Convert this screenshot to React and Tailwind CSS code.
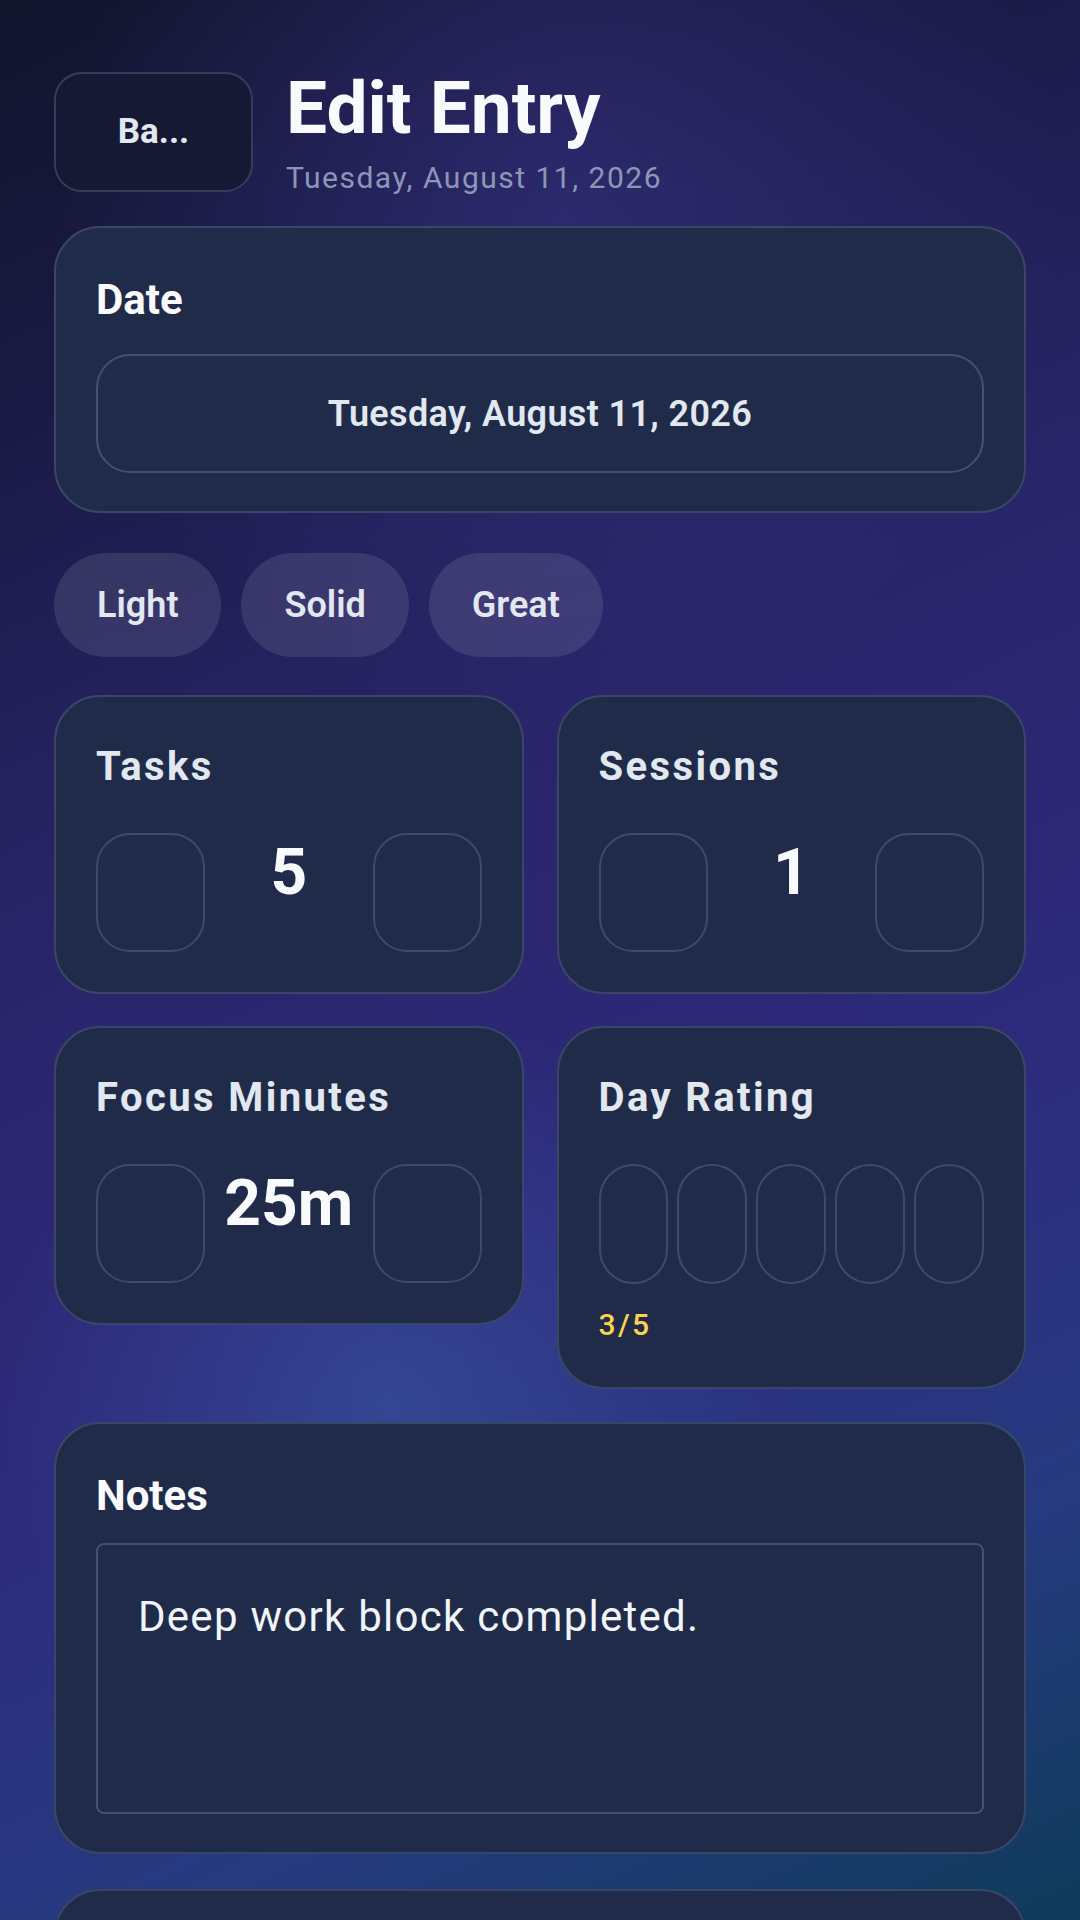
import React from "react";

const card = "rounded-[46px] border-2 border-[#3a4666] bg-[#202b4a]";

function Stepper({ label, value }) {
  return (
    <div className={`${card} p-[40px]`}>
      <div className="text-[40px] leading-[60px] font-bold tracking-[0.06em] text-[#e2e8f0]">{label}</div>
      <div className="mt-[36px] flex items-start justify-between">
        <button className="w-[109px] h-[119px] rounded-[34px] border-2 border-[#3e4a69]" />
        <span className="text-[64px] leading-[80px] font-bold text-[#f8fafc]">{value}</span>
        <button className="w-[109px] h-[119px] rounded-[34px] border-2 border-[#3e4a69]" />
      </div>
    </div>
  );
}

export default function App() {
  return (
    <div className="h-[1920px] w-full overflow-hidden font-['Roboto',sans-serif] px-[54px] pt-[72px] bg-[radial-gradient(circle_at_52%_11%,rgba(58,54,140,0.55),transparent_28%),radial-gradient(circle_at_36%_73%,rgba(60,100,175,0.45),transparent_25%),linear-gradient(155deg,#12142c_0%,#1b1a46_18%,#29256a_40%,#2e2a7c_62%,#263a80_82%,#0f3b5a_100%)]">
      {/* header: back button + title */}
      <header className="flex items-start gap-[33px] h-[120px]">
        <button className="w-[199px] h-[120px] shrink-0 rounded-[28px] border-2 border-[#363d5c] bg-[#151934] text-[35px] font-bold text-[#e2e8f0]">
          Ba...
        </button>
        <div>
          <h1 className="text-[73px] leading-none font-bold text-[#f8fafc]">Edit Entry</h1>
          <p className="mt-[15px] text-[30px] leading-[1.2] tracking-[0.05em] text-[#8c97b8]">Tuesday, August 11, 2026</p>
        </div>
      </header>

      <section className={`${card} mt-[34px] px-[40px] pt-[40px] pb-[38px]`}>
        <div className="text-[42px] leading-[63px] font-bold text-[#f8fafc]">Date</div>
        <div className="mt-[23px] h-[119px] rounded-[34px] border-2 border-[#45516f] flex items-center justify-center text-[36px] font-semibold tracking-[0.01em] text-[#e2e8f0]">
          Tuesday, August 11, 2026
        </div>
      </section>

      <div className="mt-[40px] flex gap-[20px]">
        {["Light", "Solid", "Great"].map((t) => (
          <button key={t} className="h-[104px] px-[43px] rounded-full bg-white/10 text-[36px] font-semibold text-[#e2e8f0]">
            {t}
          </button>
        ))}
      </div>

      <div className="mt-[38px] grid grid-cols-2 gap-x-[33px] gap-y-[32px] items-start">
        <Stepper label="Tasks" value="5" />
        <Stepper label="Sessions" value="1" />
        <Stepper label="Focus Minutes" value="25m" />
        <div className={`${card} p-[40px]`}>
          <div className="text-[40px] leading-[60px] font-bold tracking-[0.06em] text-[#e2e8f0]">Day Rating</div>
          <div className="mt-[36px] flex gap-[9px]">
            {[1, 2, 3, 4, 5].map((n) => (
              <button key={n} className="flex-1 h-[120px] rounded-full border-2 border-[#3e4a69]" />
            ))}
          </div>
          <div className="mt-[18px] text-[30px] leading-[1.5] font-medium tracking-[0.08em] text-[#fcd34d]">3/5</div>
        </div>
      </div>

      <section className={`${card} mt-[33px] px-[40px] pt-[40px] pb-[38px]`}>
        <div className="text-[42px] leading-[63px] font-bold text-[#f8fafc]">Notes</div>
        <div className="mt-[16px] h-[271px] rounded-[8px] border-2 border-[#45516f] p-[40px] text-[42px] leading-[63px] tracking-[0.03em] text-[#f1f5f9]">
          Deep work block completed.
        </div>
      </section>

      <section className={`${card} mt-[35px] h-[200px]`} />
    </div>
  );
}
